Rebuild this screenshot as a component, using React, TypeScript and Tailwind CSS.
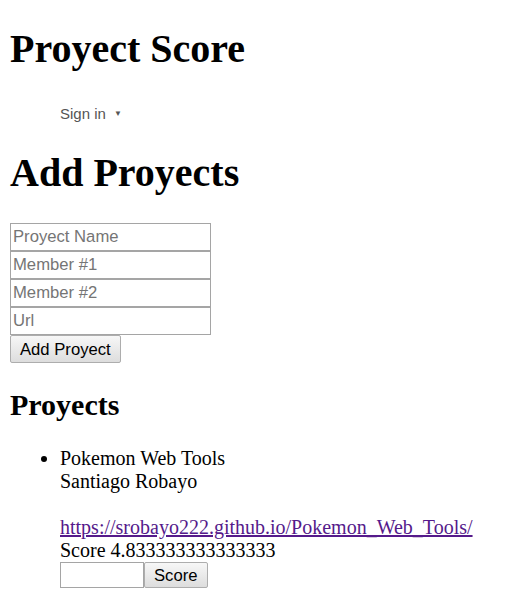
import React from "react";

const serif = { fontFamily: '"Liberation Serif", "Times New Roman", serif' };

export default function App() {
  return (
    <div
      className="min-h-[595px] w-[514px] bg-white px-[10px] pt-[26px] text-black"
      style={serif}
    >
      <h1 className="m-0 text-[40px] font-bold leading-[46px]">Proyect Score</h1>
      <div className="mt-[30px] flex h-[24px] items-center pl-[50px] font-['Liberation_Sans',Arial,sans-serif] text-[15px] text-[#555]">
        <span>Sign in</span>
        <span className="ml-[8px] text-[8px]">▼</span>
      </div>
      <h1 className="mt-[24px] text-[40px] font-bold leading-[46px]">Add Proyects</h1>
      <form className="mt-[27px] flex flex-col items-start font-['Liberation_Sans',Arial,sans-serif] text-[16.67px]">
        {["Proyect Name", "Member #1", "Member #2", "Url"].map((p) => (
          <input
            key={p}
            placeholder={p}
            className="box-border h-[28px] w-[201px] border border-[#a5a5a5] bg-white px-[2px] text-[16.67px] text-black outline-none placeholder:text-[#757575]"
          />
        ))}
        <button
          type="button"
          className="box-border h-[28px] rounded-[2px] border border-[#adadad] bg-gradient-to-b from-[#f7f7f7] to-[#dddddd] px-[9px] text-[16.67px] text-black"
        >
          Add Proyect
        </button>
      </form>
      <h2 className="mt-[24px] text-[30px] font-bold leading-[35px]">Proyects</h2>
      <ul className="mt-[25px] list-disc pl-[50px] text-[20px] leading-[23px]">
        <li>
          Pokemon Web Tools
          <br />
          Santiago Robayo
          <br />
          <br />
          <a href="#" className="text-[#551a8b] underline">
            https://srobayo222.github.io/Pokemon_Web_Tools/
          </a>
          <br />
          Score 4.833333333333333
          <div className="flex font-['Liberation_Sans',Arial,sans-serif] text-[16.67px]">
            <input className="box-border h-[26px] w-[84px] border border-[#a5a5a5] bg-white px-[2px] outline-none" />
            <button
              type="button"
              className="box-border h-[26px] rounded-[2px] border border-[#adadad] bg-gradient-to-b from-[#f7f7f7] to-[#dddddd] px-[9px] text-black"
            >
              Score
            </button>
          </div>
        </li>
      </ul>
    </div>
  );
}
